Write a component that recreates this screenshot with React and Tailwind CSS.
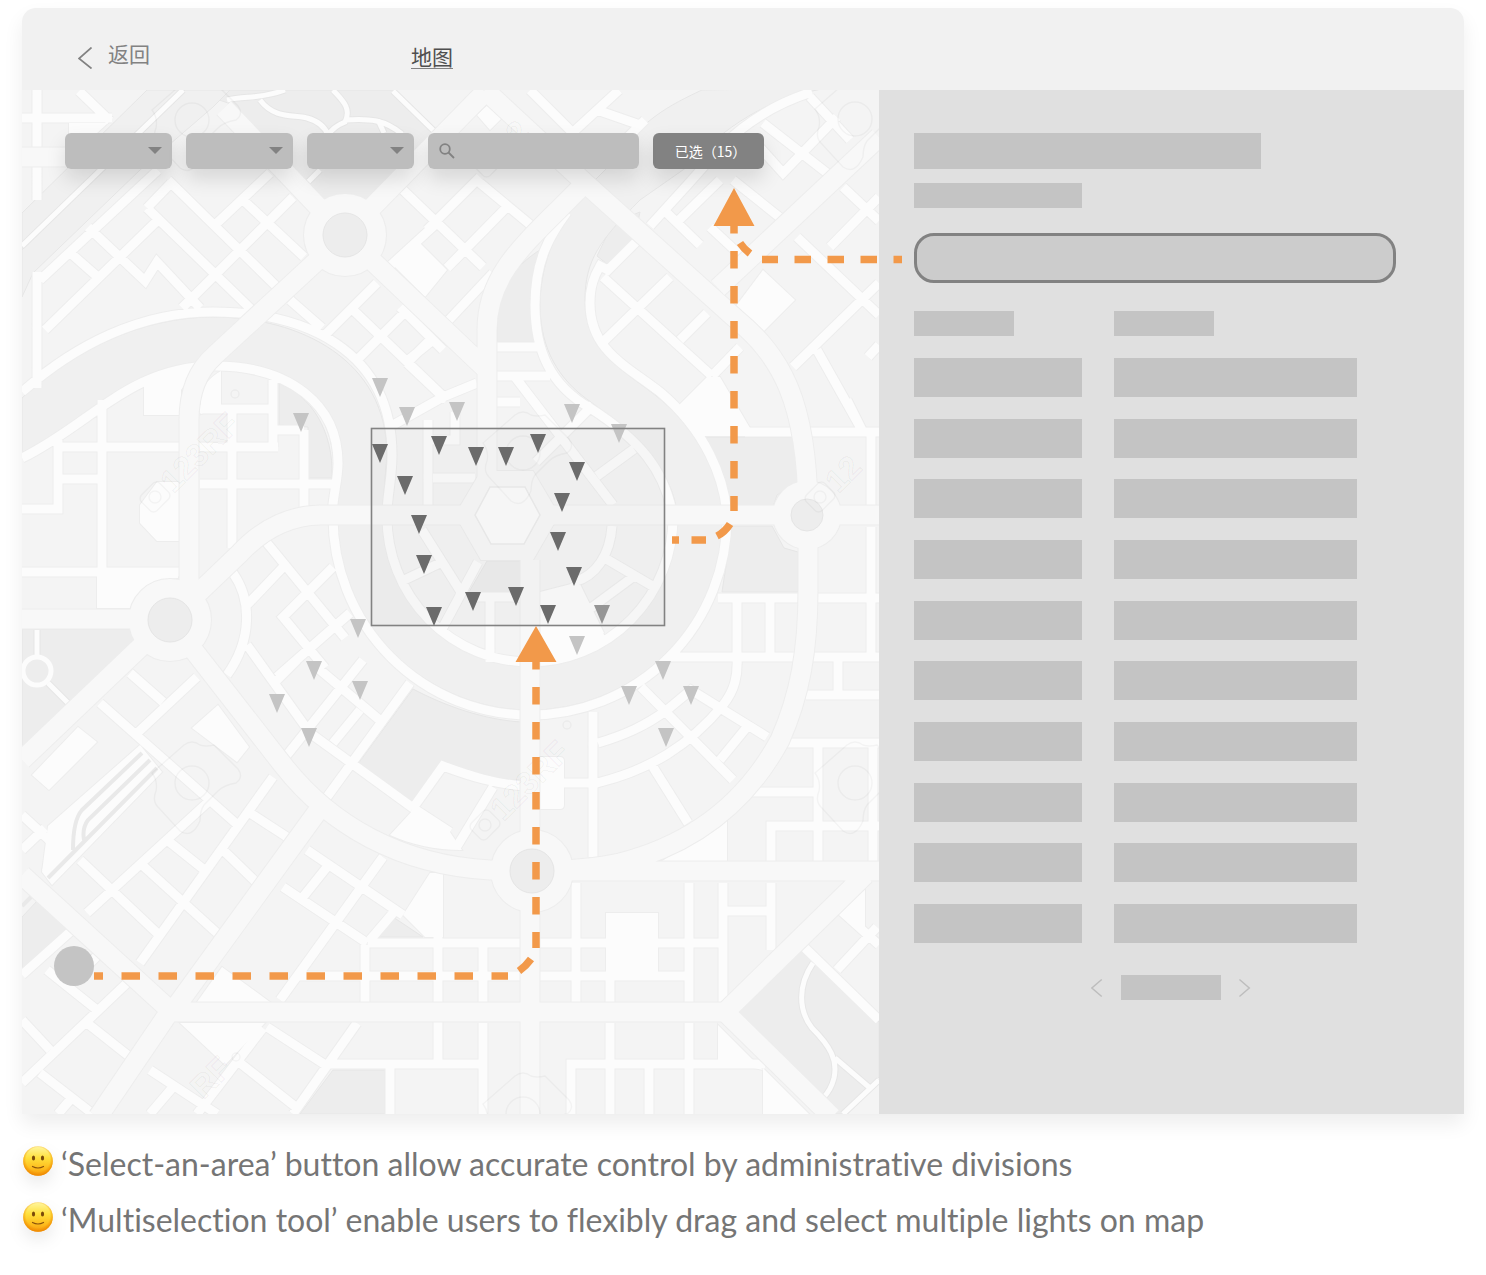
import React from "react";

const RIVERS = [
  "M22 398 C70 352 140 317 213 317 C300 317 387 360 387 455 L382 517 H337 L334 470 C334 400 280 362 215 362 C130 362 90 420 22 453Z",
  "M723 517 C722 478 700 430 655 395 C620 368 585 350 585 300 C585 260 600 240 640 200 L690 165 C720 130 770 95 830 88 L702 90 C670 105 640 120 610 165 L587 188 C560 220 540 260 540 305 C540 350 560 380 588 400 C640 437 672 470 678 517Z",
  "M22 213 L147 90 H185 L22 250Z",
  "M22 245 L183 90 H230 L213 107 L140 170 L33 273 L22 297Z",
];

const PARKS = [
  "M190 90 H393 L436 131 L366 200 H325 L228 103Z",
  "M22 629 H130 L135 641 L22 748Z",
  "M279 383 C310 395 334 430 332 478 H308 V427 L279 425Z",
  "M413 689 C445 706 485 720 522 722 V780 C490 780 465 772 443 764 L411 806 L355 768Z",
  "M497 342 V310 C500 285 520 262 540 250 C528 285 530 320 536 342Z",
  "M613 223 L640 212 L634 240 L607 264 L597 256Z",
  "M701 437 H798 V482 L777 495 L773 507 H727Z",
  "M732 526 H772 L784 548 L798 552 V592 H722Z",
  "M487 561 H522 V592 H469Z",
  "M393 917 L423 937 H377Z",
  "M22 917 L38 900 L68 928 L22 972Z",
  "M333 1070 H385 V1114 H300Z",
  "M734 1012 L802 947 L879 1022 V1077 L843 1114 H833Z",
];

const PLAZAS = [
  "M69 123 H108 L96 134 H69Z",
  "M144 382 C165 370 185 364 200 364 L181 390 V415 H144Z",
  "M201 414 V400 C201 385 212 376 221 371 V405Z",
  "M97 572 H178 V578 L160 580 C148 586 135 595 130 608 H97Z",
  "M180 482 H157 L140 505 V523 L157 541 H180Z",
  "M390 262 L420 243 L447 270 L425 297Z",
  "M493 100 L507 113 L490 130 L477 115Z",
  "M763 270 L795 300 L760 335 L733 310Z",
  "M677 407 L707 377 L720 377 L750 428 L745 436 H698Z",
  "M540 592 L575 583 L607 640 L578 658 L540 665Z",
  "M218 705 L249 747 L237 762 L192 728Z",
  "M78 727 L97 742 L49 790 L32 775Z",
  "M140 745 L162 772 L52 885 L42 872 L48 826Z",
  "M413 810 L450 832 L462 850 C435 850 410 844 390 835Z",
  "M443 873 V937 H425 L403 915 L430 873Z",
  "M544 757 H560 Q564 757 564 761 V805 Q564 809 560 809 H540 V757Z",
  "M606 913 H658 V972 H606Z",
  "M727 820 V861 H662Z",
  "M180 1023 H265 L225 1065Z",
  "M222 967 L270 1002 H197Z",
  "M718 1025 L763 1070 L718 1060Z",
  "M763 1068 L809 1114 H763Z",
  "M865 882 V927 L838 910Z",
];

const STREETS = [
  // north-west quarter
  "M37 90 V200 M37 272 V388 M22 118 H112 M79 91 L110 121",
  "M270 173 L216 224 M293 197 L182 308 M147 208 L254 312 M168 180 L277 287 M243 200 L304 257",
  "M45 330 L160 218 M147 208 L171 183 M40 280 L158 170 M67 250 L100 279 M88 227 L145 281 L157 262 L200 308",
  "M290 300 L322 328 M377 283 L322 338 M350 307 L447 400 M407 310 L355 362 M433 340 L407 361 M400 307 L443 350",
  "M443 397 L477 383 M443 397 L393 425 M407 363 L443 397",
  "M403 190 L483 267 M437 223 L390 266 M480 177 L427 230 M507 207 L447 268 M493 273 L447 322 M480 183 L533 227 M433 337 L407 363",
  "M530 90 L590 150 M619 90 L570 135 M645 120 L600 165 M597 110 L640 125",
  // river embankments
  "M22 392 C75 345 140 312 213 312 C305 312 392 350 392 455 C392 480 387 495 387 515",
  "M22 458 C90 425 130 366 215 366 C290 366 338 405 338 463 C338 480 333 495 332 515",
  "M387 517 A143 145 0 0 0 673 517 C665 470 640 440 590 408 C550 385 535 350 535 305 C535 260 550 235 567 212",
  "M333 517 A197 198 0 0 0 727 517 C725 478 705 430 660 392 C625 365 590 350 590 303 C590 286 594 276 600 266 L608 270 L637 241 M650 226 L690 182 L720 148 C750 118 780 102 812 92",
  // north-east quarter
  "M763 123 L827 173 M810 97 L850 140 M837 117 L783 173 L755 142 M733 180 L783 220 M667 213 L700 245 M677 222 L720 180 M710 227 L740 255",
  "M603 277 L712 376 M670 277 L603 342 M707 313 L680 340 M740 347 L712 376",
  "M797 237 L879 315 M843 187 L879 221 M879 197 L830 247 M879 283 L793 367 M817 350 L863 432 M847 400 L863 432 M879 345 L868 357",
  "M745 432 H879 M871 432 V505 M718 598 H879 M737 598 V657 M770 598 V657 M670 657 H879 M838 657 V695 M806 695 H879 M871 527 V657",
  // inner circle
  "M496 347 H540 M496 376 H550 M496 402 H520 M515 377 L613 505 M593 405 L536 462 M634 449 L597 476",
  "M428 420 V507 M433 478 H475 M455 412 V440 H430 M422 530 L461 592 M400 582 L440 563 M478 562 L441 631 M490 597 V662 M468 597 H522",
  "M612 526 C610 555 596 576 574 582 M603 557 L654 587 M637 574 L591 608 M574 582 L600 635",
  // west quarter
  "M102 400 V568 M55 447 H278 M58 440 V509 H22 M58 479 H100 M22 572 H180 M232 405 V548 M200 409 H273 M273 380 V447 M200 484 H333 M304 430 V507 M275 430 H304",
  "M267 543 L345 638 M233 573 C252 600 252 640 227 675 M247 605 L287 563 M333 567 L283 617 L325 668 M350 613 L277 677 M247 645 L310 733",
  "M363 660 L287 755 M313 664 L382 722 M310 733 L413 808 M410 683 L327 797 M360 710 L333 743 M297 660 L277 680",
  "M413 808 L443 766 C470 776 495 784 525 786 M493 787 L456 848 M450 832 L413 808",
  // south-west quarter
  "M100 703 L240 827 M130 673 L163 702 M197 677 L133 737 M207 803 L87 913 M273 777 L140 963 M250 813 L287 837 M223 850 L257 883",
  "M167 840 L207 872 M140 863 L217 933 M80 860 L157 933 M22 815 L60 850 M22 850 L45 828 M60 850 L46 872 M22 975 L70 932",
  "M307 850 L403 915 M383 857 L280 1000 M283 887 L367 943 M327 867 L303 897 M393 913 L370 940",
  "M22 1020 L50 1050 M127 983 L22 1083 M47 970 L97 1010 M98 955 L85 968 M87 1023 L130 1057 M40 1073 L93 1114 M70 1100 L58 1114 M150 1070 L217 1114 M173 1087 L150 1114",
  "M357 1023 L293 1114 M267 1027 L327 1066 M240 1063 L297 1108 M263 1028 L197 1114 M327 1064 H438",
  // south
  "M368 943 H520 M300 976 H520 M365 945 V1003 M438 873 V1060 M390 1066 V1114 M483 947 V1003 M483 1023 V1114 M430 1064 H480",
  "M540 943 H720 M540 976 H689 M576 883 V1003 M610 976 V1003 M610 1023 V1114 M689 883 V1003 M689 1023 V1114 M723 883 V1005 M771 883 V950 M723 911 H771 M571 1114 V1064 H765 M649 1066 V1114",
  "M802 945 L879 1020 M837 970 L877 927 M840 910 L879 945",
  // south-east quarter
  "M785 743 H879 M750 792 H815 M818 743 V865 M873 743 V865 M771 862 V826 H879",
  "M598 743 C625 735 645 726 667 710 L691 690 L767 737 M564 783 H597 C650 770 690 745 723 705 C735 690 738 675 737 657 M593 712 V857 M653 767 L688 823 M641 687 L733 780 M747 727 L720 760",
].join(" ");

const PATHS =
  "M227 100 C245 95 258 100 285 90 M260 100 C275 120 295 114 307 118 C318 121 325 127 328 135 M333 90 C342 100 352 108 345 122 C335 126 330 132 328 135 M345 120 C370 118 385 120 402 134 M378 120 L384 133 M320 170 L307 183 M813 963 C798 985 798 1010 812 1028 C830 1046 838 1060 834 1078 Q831 1090 823 1098 M835 1058 L870 1088 M843 1114 L879 1080 M37 630 V657 M48 683 L68 703 M393 91 L434 131 M22 246 L183 90";

const AVENUES = [
  "M170 620 L240 553 Q275 516 320 515 H879",
  "M189 610 V420 Q189 378 215 355 L345 235 L485 92",
  "M345 235 L224 108",
  "M345 235 L487 370 M487 515 V330 C487 270 530 240 585 183 M485 90 L585 183 L735 318 C780 355 808 400 808 515",
  "M879 137 L718 288",
  "M808 515 V590 C808 650 800 695 780 740 C745 805 690 845 620 863 Q590 870 533 871 H879",
  "M170 620 L283 765 C330 825 400 865 490 870 H533",
  "M22 619 H170 L22 760 M22 157 H66",
  "M530 560 V1114",
  "M22 875 L172 1012 H725 L865 875 M172 1012 L320 808 M172 1008 L98 1117 M725 1012 L832 1117",
].join(" ");

const ROUNDABOUTS = [
  [345, 235, 41, 22],
  [170, 620, 41, 22],
  [532, 871, 41, 22],
  [807, 515, 34, 16],
];

const TRACKS =
  "M142 753 L82 810 Q73 820 73 850 M150 760 L88 820 Q82 828 84 840 M157 768 L48 878 M36 892 L22 906";

const LIGHTS = [
  [380, 378], [407, 407], [457, 402], [572, 404], [301, 413], [619, 424], [358, 619], [577, 636],
  [314, 661], [360, 681], [277, 694], [309, 728], [663, 661], [629, 686], [691, 686], [666, 728],
];
const SELECTED = [
  [380, 444], [439, 436], [476, 447], [506, 447], [538, 434], [577, 462], [405, 476], [562, 493],
  [419, 515], [558, 532], [424, 555], [574, 567], [473, 592], [516, 587], [434, 607], [548, 605],
];

const marker = ([x, y]) => `M${x - 8} ${y} H${x + 8} L${x} ${y + 19}Z`;

function StampMark({ x, y, text, camera = true }) {
  return (
    <g transform={`translate(${x} ${y}) rotate(-45)`}>
      {camera && <rect x="-13" y="-11" width="26" height="22" rx="5" />}
      {camera && <circle r="6" />}
      <text x="15" y="11" fontSize="32" fontWeight="700" fontFamily="Liberation Sans, sans-serif">
        {text}
      </text>
    </g>
  );
}

function Lens({ x, y }) {
  return (
    <g transform={`translate(${x} ${y})`}>
      <circle r="17" />
      <path d="M-8 -38 Q0 -44 8 -38 Q14 -36 22 -38 L46 -14 Q52 -6 44 0 Q32 2 26 8 L12 22 Q8 28 8 38 Q0 56 -12 48 L-34 24 Q-40 18 -36 8 Q-34 -2 -40 -10Z" />
    </g>
  );
}

function CityMap() {
  return (
    <svg
      className="absolute inset-0 h-full w-full"
      viewBox="22 90 857 1024"
      preserveAspectRatio="xMinYMin slice"
      aria-hidden="true"
    >
      <rect x="22" y="90" width="857" height="1024" fill="#f4f4f4" />
      <path d={PARKS.join(" ")} fill="#ededed" stroke="#e6e6e6" />
      <path d={RIVERS.join(" ")} fill="#f0f0f0" stroke="#e6e6e6" />
      <circle cx="530" cy="517" r="170" fill="none" stroke="#e6e6e6" strokeWidth="47" strokeDasharray="534 534" />
      <circle cx="530" cy="517" r="170" fill="none" stroke="#f0f0f0" strokeWidth="45" strokeDasharray="534 534" />
      <g fill="none">
        <path d={PATHS} stroke="#e6e6e6" strokeWidth="7" />
        <path d={STREETS} stroke="#ededed" strokeWidth="11" />
        <path d={PLAZAS.join(" ")} stroke="#ededed" strokeWidth="2" />
        <path d={PATHS} stroke="#fcfcfc" strokeWidth="5" />
        <path d={STREETS} stroke="#fcfcfc" strokeWidth="9" />
      </g>
      <path d={PLAZAS.join(" ")} fill="#fcfcfc" />
      <path d={TRACKS} fill="none" stroke="#e9e9e9" strokeWidth="4" />
      <circle cx="37" cy="671" r="14" fill="#ededed" stroke="#fcfcfc" strokeWidth="5" />
      <g fill="none" stroke="#ededed">
        <path d={AVENUES} strokeWidth="21" />
        {ROUNDABOUTS.map(([x, y, r]) => (
          <circle key={x} cx={x} cy={y} r={r} strokeWidth="2" />
        ))}
        <path d="M455 515 L481 471 H533 L559 515 L533 560 H481Z" strokeWidth="2" />
      </g>
      <path d={AVENUES} fill="none" stroke="#f8f8f8" strokeWidth="19" />
      {ROUNDABOUTS.map(([x, y, r, inner]) => (
        <g key={x}>
          <circle cx={x} cy={y} r={r} fill="#f8f8f8" />
          <circle cx={x} cy={y} r={inner} fill="#ededed" stroke="#e5e5e5" />
        </g>
      ))}
      <path d="M455 515 L481 471 H533 L559 515 L533 560 H481Z" fill="#f8f8f8" />
      <path d="M475 515 L490 487 H525 L540 515 L524 544 H491Z" fill="#fcfcfc" stroke="#ebebeb" strokeWidth="1.5" />
      <g fill="none" stroke="#000" strokeOpacity="0.035" strokeWidth="1.5">
        <StampMark x={155} y={497} text="123RF" />
        <StampMark x={485} y={825} text="123RF" />
        <StampMark x={820} y={497} text="12" />
        <StampMark x={488} y={162} text="12" />
        <StampMark x={185} y={1103} text="RF" camera={false} />
        <Lens x={192} y={120} />
        <Lens x={855} y={119} />
        <Lens x={192} y={783} />
        <Lens x={855} y={783} />
        <Lens x={523} y={453} />
        <Lens x={523} y={1114} />
        <circle cx="235" cy="394" r="4" />
        <circle cx="567" cy="725" r="4" />
        <circle cx="236" cy="1057" r="4" />
      </g>
    </svg>
  );
}

function MapOverlay() {
  return (
    <svg
      className="pointer-events-none absolute inset-0 z-10 h-full w-full overflow-visible"
      viewBox="22 90 857 1024"
      preserveAspectRatio="xMinYMin slice"
      aria-hidden="true"
    >
      <path d={LIGHTS.map(marker).join(" ")} fill="#c4c4c4" />
      <rect x="371.5" y="428.5" width="293" height="197" fill="#c4c4c4" fillOpacity="0.1" stroke="#828282" strokeWidth="1.6" />
      <path d={SELECTED.map(marker).join(" ")} fill="#6b6b6b" />
      <path d={marker([602, 605])} fill="#959595" />
      <g fill="none" stroke="#f2994a" strokeWidth="7.5">
        <path d="M94 976 H508" strokeDasharray="18.5 18.5" strokeDashoffset="9.5" />
        <path d="M519 971 Q526 966 531 959" />
        <path d="M536 652 V948" strokeDasharray="17.5 17.5" />
        <path d="M734 216 V511" strokeDasharray="17.5 17.5" />
        <path d="M730 524 Q725 532 717 536 M706 540 H691.5 M679 540 H672" />
        <path d="M740 243 Q744 249 750 253.5" />
        <path d="M762 259.5 H778 M794.5 259.5 H902" strokeDasharray="16.5 16.5" />
      </g>
      <path d="M536 626 L556.5 662 H515.5Z M734 188 L754.5 226 H713.5Z" fill="#f2994a" />
    </svg>
  );
}

function Filter({ label }) {
  return (
    <div className="relative w-[107px] rounded-md shadow-[0_10px_20px_rgba(0,0,0,0.12)]">
      <select aria-label={label} className="block h-9 w-full appearance-none rounded-md bg-[#bdbdbd] px-3 text-sm">
        <option></option>
      </select>
      <svg className="pointer-events-none absolute top-3.5 right-2.5 h-[7px] w-3.5" viewBox="0 0 14 7" aria-hidden="true">
        <path d="M0 0 H14 L7 7Z" fill="#828282" />
      </svg>
    </div>
  );
}

function Smiley({ id }) {
  return (
    <svg className="mb-1.5 h-[30px] w-[30px] shrink-0 drop-shadow-[0_8px_8px_rgba(0,0,0,0.08)]" viewBox="0 0 30 30" role="img" aria-label="smile">
      <defs>
        <linearGradient id={id} x1="0" y1="0" x2="0" y2="1">
          <stop offset="0" stopColor="#fff6a0" />
          <stop offset="0.4" stopColor="#ffe03c" />
          <stop offset="0.75" stopColor="#fdbb1d" />
          <stop offset="1" stopColor="#f79d10" />
        </linearGradient>
        <radialGradient id={`${id}-rim`} cx="0.5" cy="0.45" r="0.56">
          <stop offset="0.72" stopColor="#f08c00" stopOpacity="0" />
          <stop offset="1" stopColor="#ec8400" stopOpacity="0.95" />
        </radialGradient>
      </defs>
      <circle cx="15" cy="15" r="14.8" fill={`url(#${id})`} />
      <circle cx="15" cy="15" r="14.8" fill={`url(#${id}-rim)`} />
      <ellipse cx="10.5" cy="12" rx="1.6" ry="2.6" fill="#7a4a0a" />
      <ellipse cx="19.5" cy="12" rx="1.6" ry="2.6" fill="#7a4a0a" />
      <path d="M9.5 20.5 Q15 23.5 20.500 20.5" fill="none" stroke="#8a540c" strokeWidth="1.2" strokeLinecap="round" />
    </svg>
  );
}

function Chevron({ className, points }) {
  return (
    <svg className={className} viewBox="0 0 14 22" fill="none" stroke="currentColor" strokeWidth="1.7" aria-hidden="true">
      <polyline points={points} />
    </svg>
  );
}

const Block = ({ className }) => <div className={`bg-[#c4c4c4] ${className}`} />;

export default function App() {
  return (
    <main className="bg-white px-[22px] pt-2 pb-8 font-['Noto_Sans_CJK_SC',sans-serif]">
      <div className="overflow-hidden rounded-t-[14px] shadow-[0_10px_20px_rgba(0,0,0,0.07)]">
        <header className="flex h-[82px] items-center bg-[#f1f1f1] pl-14">
          <a href="#back" className="flex items-center gap-4 text-[#828282]">
            <Chevron className="mt-[18px] h-[22px] w-3.5" points="13.5,0.5 1,11.5 13.5,21.5" />
            <span className="mt-2 text-[21px] leading-6">返回</span>
          </a>
          <h1 className="mt-3.5 ml-[261px] border-b border-[#828282] text-[21px] leading-6 text-[#4f4f4f]">地图</h1>
        </header>

        <div className="flex">
          <section aria-label="地图" className="relative flex flex-1 flex-col justify-between pb-32">
            <CityMap />
            <MapOverlay />
            <div className="relative z-20 flex gap-3.5 pt-[43px] pl-[43px]">
              <Filter label="区域" />
              <Filter label="街道" />
              <Filter label="类型" />
              <div className="relative w-[211px] rounded-md shadow-[0_10px_20px_rgba(0,0,0,0.12)]">
                <input type="search" aria-label="搜索" className="block h-9 w-full rounded-md bg-[#bdbdbd] pr-3 pl-8 text-sm outline-none" />
                <svg className="pointer-events-none absolute top-2.5 left-[11px] h-4 w-4" viewBox="0 0 16 16" fill="none" stroke="#828282" strokeWidth="1.8" aria-hidden="true">
                  <circle cx="6" cy="6" r="4.8" />
                  <path d="M9.5 9.5 L15 15" />
                </svg>
              </div>
              <button type="button" className="h-9 w-[111px] rounded-md bg-[#828282] pl-1 text-sm text-white shadow-[0_10px_20px_rgba(0,0,0,0.12)]">
                已选（15）
              </button>
            </div>
            <button type="button" aria-label="框选" className="relative z-20 ml-8 h-10 w-10 rounded-full bg-[#c4c4c4]" />
          </section>

          <aside className="w-[585px] bg-[#e0e0e0] pt-[43px] pr-[68px] pb-[114px] pl-[35px]">
            <Block className="h-9 w-[347px]" />
            <Block className="mt-3.5 h-[25px] w-[168px]" />
            <input
              type="text"
              aria-label="名称"
              className="mt-[25px] block h-[50px] w-full rounded-[20px] border-[3px] border-[#828282] bg-[#cccccc] px-4 outline-none"
            />
            <div className="mt-7 grid grid-cols-[168px_243px] gap-x-8">
              <Block className="h-[25px] w-[100px]" />
              <Block className="h-[25px] w-[100px]" />
            </div>
            <div className="mt-[22px] grid h-[585px] grid-cols-[168px_243px] content-between gap-x-8">
              {Array.from({ length: 20 }, (_, i) => (
                <Block key={i} className="h-[39px]" />
              ))}
            </div>
            <nav aria-label="分页" className="mt-8 flex items-center gap-[18px] pl-[177px] text-[#bdbdbd]">
              <button type="button" aria-label="上一页">
                <Chevron className="h-[22px] w-3" points="12.5,1 1,11 12.5,21" />
              </button>
              <Block className="h-[25px] w-[100px]" />
              <button type="button" aria-label="下一页">
                <Chevron className="h-[22px] w-3" points="0.5,1 12,11 0.5,21" />
              </button>
            </nav>
          </aside>
        </div>
      </div>

      <ul className="mt-[22px] pl-px font-['Lato',sans-serif] text-[32px] leading-[56px] text-[#757575] [font-variant-ligatures:none]">
        <li className="flex items-center gap-2">
          <Smiley id="smile-a" />
          <span>‘Select-an-area’ button allow accurate control by administrative divisions</span>
        </li>
        <li className="flex items-center gap-2">
          <Smiley id="smile-b" />
          <span>‘Multiselection tool’ enable users to flexibly drag and select multiple lights on map</span>
        </li>
      </ul>
    </main>
  );
}
